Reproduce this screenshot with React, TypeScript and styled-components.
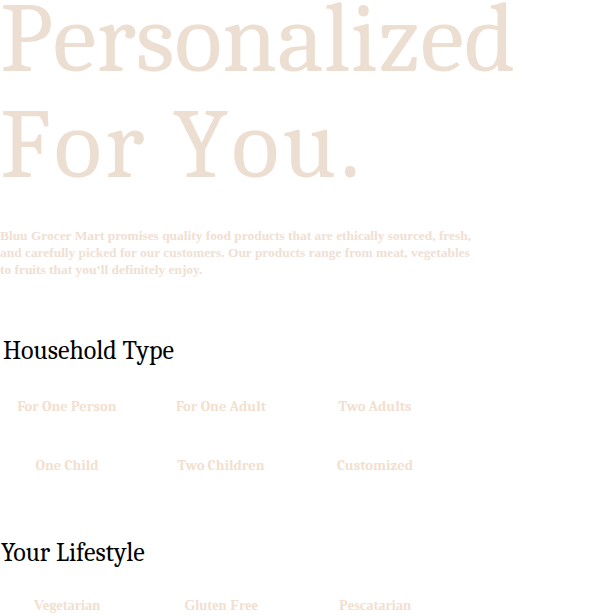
import React from "react";
import styled, { createGlobalStyle } from "styled-components";

const Global = createGlobalStyle`
  html, body { margin: 0; padding: 0; background: #ffffff; }
  body { font-family: "Caladea", "Liberation Serif", serif; }
`;

const Page = styled.main`
  width: 600px;
  display: flex;
  flex-direction: column;
`;

const Hero = styled.h1`
  margin: -14px 0 0 0;
  font-family: "Caladea", serif;
  font-weight: 400;
  font-size: 99px;
  line-height: 106px;
  font-kerning: none;
  color: #ecdfd1;
`;

const HeroLine = styled.span<{ $spacing: number }>`
  display: block;
  letter-spacing: ${(p) => p.$spacing}px;
`;

const Intro = styled.p`
  margin: 29px 0 0 0;
  width: 480px;
  font-family: "Liberation Serif", serif;
  font-weight: 700;
  font-size: 13.4px;
  line-height: 17px;
  color: #efe0d3;
`;

const SectionTitle = styled.h2<{ $indent: number }>`
  margin: 0;
  padding-left: ${(p) => p.$indent}px;
  font-family: "Caladea", serif;
  font-weight: 400;
  font-size: 26px;
  line-height: 30px;
  color: #000;
`;

const Options = styled.div`
  display: grid;
  grid-template-columns: repeat(3, 134px);
  column-gap: 20px;
  row-gap: 39px;
`;

const Option = styled.button<{ $font: string; $size: number }>`
  height: 20px;
  padding: 0;
  border: none;
  background: transparent;
  font-family: ${(p) => p.$font}, serif;
  font-weight: 700;
  font-size: ${(p) => p.$size}px;
  color: #f2dfcf;
  text-align: center;
`;

const Section = styled.section<{ $top: number; $gap: number }>`
  margin-top: ${(p) => p.$top}px;
  display: flex;
  flex-direction: column;
  gap: ${(p) => p.$gap}px;
`;

const household = ["For One Person", "For One Adult", "Two Adults", "One Child", "Two Children", "Customized"];
const lifestyle = ["Vegetarian", "Gluten Free", "Pescatarian"];

export default function App() {
  return (
    <Page>
      <Global />
      <Hero>
        <HeroLine $spacing={0}>Personalized</HeroLine>
        <HeroLine $spacing={3.5}>For You.</HeroLine>
      </Hero>
      <Intro>
        Bluu Grocer Mart promises quality food products that are ethically sourced, fresh,
        and carefully picked for our customers. Our products range from meat, vegetables
        to fruits that you’ll definitely enjoy.
      </Intro>
      <Section $top={58} $gap={30}>
        <SectionTitle $indent={3}>Household Type</SectionTitle>
        <Options>
          {household.map((t) => (
            <Option key={t} $font='"Caladea"' $size={14.6}>
              {t}
            </Option>
          ))}
        </Options>
      </Section>
      <Section $top={63} $gap={27}>
        <SectionTitle $indent={1}>Your Lifestyle</SectionTitle>
        <Options>
          {lifestyle.map((t) => (
            <Option key={t} $font='"Liberation Serif"' $size={14.4}>
              {t}
            </Option>
          ))}
        </Options>
      </Section>
    </Page>
  );
}
